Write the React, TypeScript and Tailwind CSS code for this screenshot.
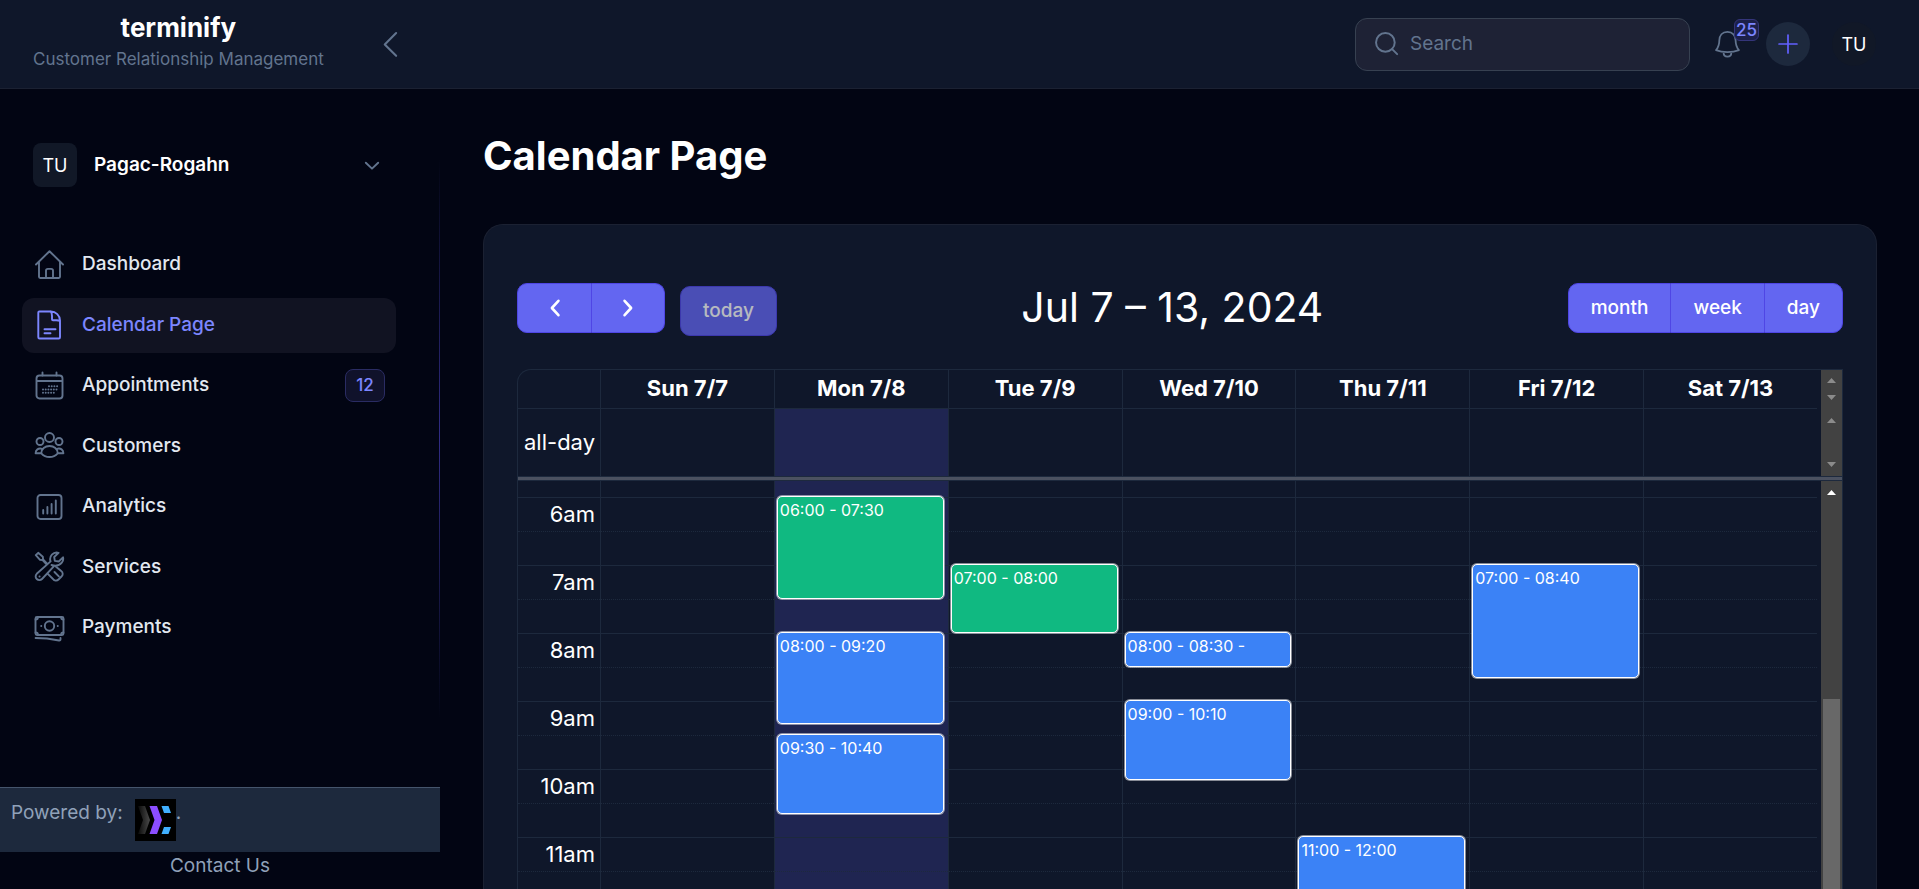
import React from 'react';

interface NavItem {
  label: string;
  icon: React.ReactNode;
  active?: boolean;
  badge?: string;
}

interface CalendarEvent {
  day: number;
  start: number; // minutes from midnight
  end: number;
  label: string;
  color: string;
}

const Icon: React.FC<{ className?: string; children: React.ReactNode }> = ({ className = 'size-8', children }) => (
  <svg
    className={className}
    viewBox="0 0 32 32"
    fill="none"
    stroke="currentColor"
    strokeWidth={1.9}
    strokeLinecap="round"
    strokeLinejoin="round"
    aria-hidden="true"
  >
    {children}
  </svg>
);

const navItems: NavItem[] = [
  {
    label: 'Dashboard',
    icon: (
      <Icon>
        <path d="M3 15.500 16.500 2.200 30 15.500M6 13v14.800c0 .8.400 1.200 1.200 1.200h18.600c.8 0 1.200-.4 1.200-1.200V13M13 28.800v-7c0-1.200.7-1.900 1.900-1.900h3.200c1.200 0 1.900.7 1.900 1.900v7" />
      </Icon>
    ),
  },
  {
    label: 'Calendar Page',
    active: true,
    icon: (
      <Icon>
        <path d="M6.300 2.500h11.500c5 0 9.200 4 9.200 9v16.700a1.300 1.300 0 0 1-1.300 1.300H6.600a1.300 1.300 0 0 1-1.300-1.300V3.500c0-.6.400-1 1-1zM17.800 2.600c1 1.200 1.200 2.600 1.200 4.400v3.200c0 .6.400 1 1 1h3.200c1.800 0 2.900.2 3.700 1M11.500 20.200h11M11.500 24.300h6" />
      </Icon>
    ),
  },
  {
    label: 'Appointments',
    badge: '12',
    icon: (
      <Icon>
        <rect x="3.500" y="5.500" width="26" height="23" rx="3" />
        <path d="M4 11h25M9.500 2.500v3M23.500 2.500v3" />
        <path d="M16 16.200h8.500M10 19.500h14.500M10 22.800h11.500" strokeWidth={2} strokeDasharray="0 2.700" />
      </Icon>
    ),
  },
  {
    label: 'Customers',
    icon: (
      <Icon>
        <circle cx="16.500" cy="7.500" r="4.500" />
        <circle cx="7" cy="11.500" r="3.500" />
        <circle cx="26" cy="11.500" r="3.500" />
        <path d="M8.300 23.300c0-4.500 3.600-7.300 8.200-7.300s8.200 2.800 8.200 7.300c-2.200 2.600-5 3.700-8.200 3.700s-6-1.100-8.200-3.700zM9 18.800c-3.700-.9-6.400 1-6.400 4.400h5.500M24 18.800c3.700-.9 6.400 1 6.400 4.400h-5.500" />
      </Icon>
    ),
  },
  {
    label: 'Analytics',
    icon: (
      <Icon>
        <rect x="4.500" y="4" width="24" height="24" rx="3" />
        <path d="M10.200 19v3.500M14.400 16v6.500M18.600 13v9.500M22.800 9.500v13" />
      </Icon>
    ),
  },
  {
    label: 'Services',
    icon: (
      <Icon>
        <path d="M13.800 12.300 10.100 8.500 9.800 5.700 5.200 1.800 2.800 4.200l4 4.500 2.800.4 3.500 3.800M18.500 14c3.500 1.300 7.800.7 10.300-2.300 1.200-1.500 1.700-3.600 1.200-5.400l-4.200 4.200-4-.6-.6-3.900 4.400-4.200c-2.500-.7-5 0-6.700 1.900-1.700 1.900-2.200 4.400-1.300 6.700L3.700 22.800a3.700 3.700 0 1 0 5.300 5.200L21.500 14.700M14.300 22.300l5.700 5.700a3.500 3.500 0 0 0 5.500.5l3-3a3.500 3.500 0 0 0-.3-5.500l-5.200-4.300M21.500 21l4.300 4.300" />
        <path d="M6.500 25.500h.1" />
      </Icon>
    ),
  },
  {
    label: 'Payments',
    icon: (
      <Icon>
        <rect x="2.500" y="5" width="28" height="18" rx="1.500" />
        <circle cx="16.500" cy="14" r="4.700" />
        <path d="M8.200 14h.1M24.700 14h.1M2.600 7.500c1.500 0 2.300-.8 2.300-2.300M30.400 7.500c-1.500 0-2.300-.8-2.300-2.300M2.600 20.500c1.500 0 2.300.8 2.300 2.300M30.400 20.500c-1.500 0-2.300.8-2.300 2.300M2.600 26l11.400.5 12 2c1 .2 1.500-.3 1.500-1.200V26" />
      </Icon>
    ),
  },
];

const days = ['Sun 7/7', 'Mon 7/8', 'Tue 7/9', 'Wed 7/10', 'Thu 7/11', 'Fri 7/12', 'Sat 7/13'];
const today = 1;

const hours = ['6am', '7am', '8am', '9am', '10am', '11am'];
const firstHour = 6;
const hourHeight = 68;

const events: CalendarEvent[] = [
  { day: 1, start: 360, end: 450, label: '06:00 - 07:30', color: 'bg-[#10b981]' },
  { day: 1, start: 480, end: 560, label: '08:00 - 09:20', color: 'bg-[#3b82f6]' },
  { day: 1, start: 570, end: 640, label: '09:30 - 10:40', color: 'bg-[#3b82f6]' },
  { day: 2, start: 420, end: 480, label: '07:00 - 08:00', color: 'bg-[#10b981]' },
  { day: 3, start: 480, end: 510, label: '08:00 - 08:30 -', color: 'bg-[#3b82f6]' },
  { day: 3, start: 540, end: 610, label: '09:00 - 10:10', color: 'bg-[#3b82f6]' },
  { day: 4, start: 660, end: 720, label: '11:00 - 12:00', color: 'bg-[#3b82f6]' },
  { day: 5, start: 420, end: 520, label: '07:00 - 08:40', color: 'bg-[#3b82f6]' },
];

const toY = (minutes: number) => ((minutes - firstHour * 60) / 60) * hourHeight;

const ScrollArrow: React.FC<{ down?: boolean; className?: string }> = ({ down, className = 'text-[#8b8b8b]' }) => (
  <svg viewBox="0 0 9 5" className={`h-[5px] w-[9px] ${className}`} aria-hidden="true">
    <path d={down ? 'M0 0h9L4.500 5z' : 'M0 5h9L4.500 0z'} fill="currentColor" />
  </svg>
);

const Header: React.FC = () => (
  <header className="flex h-[89px] shrink-0 items-center border-b border-[#1b2132] bg-[#0f172a]">
    <div className="flex w-[440px] shrink-0 items-center justify-between pr-9 pl-[33px]">
      <div className="pb-1 text-center">
        <p className="text-[26px] leading-[34px] font-bold text-white">terminify</p>
        <p className="text-[17px] leading-7 text-slate-500">Customer Relationship Management</p>
      </div>
      <button type="button" aria-label="Collapse sidebar" className="text-slate-500">
        <Icon className="size-7">
          <path d="M23 3.500 10 16.500l13 13" strokeWidth={2.400} />
        </Icon>
      </button>
    </div>
    <div className="flex flex-1 items-center justify-end pr-[43px]">
      <label className="flex h-[53px] w-[335px] items-center gap-[10px] rounded-xl border border-[#374151] bg-[#1e2235] pl-[18px]">
        <Icon className="size-[26px] shrink-0 text-slate-500">
          <circle cx="14" cy="14" r="11.500" strokeWidth={2.400} />
          <path d="m22.300 22.300 6.200 6.200" strokeWidth={2.400} />
        </Icon>
        <input
          type="search"
          aria-label="Search"
          placeholder="Search"
          className="w-full bg-transparent text-[19px] text-white outline-none placeholder:text-slate-500"
        />
      </label>
      <button type="button" aria-label="Notifications" className="relative ml-[22px] text-slate-500">
        <Icon className="size-[30px]">
          <path d="M16.500 3C11 3 7.800 7 7.800 12.300c0 5.200-1.300 7.700-3.500 10.200 3.500 1.500 7.600 2.200 12.200 2.200s8.700-.7 12.200-2.200c-2.200-2.500-3.500-5-3.500-10.200C25.200 7 22 3 16.500 3zM12.300 24.800c0 2.900 1.800 4.700 4.200 4.700s4.200-1.800 4.200-4.700" />
        </Icon>
        <span className="absolute -top-[10px] left-[22px] rounded-md border border-[#34357a] bg-[#1c2049] px-px text-[17px] leading-5 font-medium text-indigo-400">
          25
        </span>
      </button>
      <button
        type="button"
        aria-label="Add"
        className="ml-6 flex size-11 items-center justify-center rounded-full bg-slate-800 text-indigo-500"
      >
        <Icon className="size-[22px]">
          <path d="M16 3v26M3 16h26" strokeWidth={2.500} />
        </Icon>
      </button>
      <button type="button" className="ml-[22px] size-11 rounded-full bg-[#111827] text-[18px] text-white">
        TU
      </button>
    </div>
  </header>
);

const Sidebar: React.FC = () => (
  <aside className="relative flex w-[440px] shrink-0 flex-col pt-[54px]">
    <div className="absolute top-[70px] right-0 h-[560px] w-px bg-linear-to-b from-transparent via-indigo-900 to-transparent" />
    <button type="button" className="flex items-center pr-[59px] pl-[33px] text-white">
      <span className="flex size-11 items-center justify-center rounded-lg bg-[#111827] text-[18px]">TU</span>
      <span className="ml-[17px] flex-1 text-left text-[19px] font-semibold">Pagac-Rogahn</span>
      <Icon className="size-[18px] text-slate-500">
        <path d="m5 12 11 10.500L27 12" strokeWidth={3.400} />
      </Icon>
    </button>
    <nav className="mt-[50px] mr-11 ml-[22px] flex h-[418px] flex-col justify-between">
      {navItems.map(item => (
        <a
          key={item.label}
          href="#"
          className={`flex h-[55px] items-center rounded-xl px-[11px] ${item.active ? 'bg-[#111322]' : ''}`}
        >
          <span className={item.active ? 'text-indigo-400' : 'text-slate-500'}>{item.icon}</span>
          <span
            className={`ml-[17px] flex-1 text-[19px] font-medium ${item.active ? 'text-indigo-400' : 'text-slate-200'}`}
          >
            {item.label}
          </span>
          {item.badge && (
            <span className="flex h-[33px] w-10 items-center justify-center rounded-lg border border-[#2a2c63] bg-[#10122b] text-[17px] font-medium text-indigo-400">
              {item.badge}
            </span>
          )}
        </a>
      ))}
    </nav>
    <div className="mt-auto flex h-[65px] shrink-0 items-start border-t border-slate-600 bg-slate-800 pl-[11px] text-[19px] text-slate-400">
      <span className="mt-[11px] mr-3 leading-7">Powered by:</span>
      <svg viewBox="0 0 41 42" className="mt-[11px] h-[42px] w-[41px]" aria-hidden="true">
        <defs>
          <linearGradient id="chevron-fade" x1="0" x2="1">
            <stop offset="0" stopColor="#0a0a0a" />
            <stop offset="1" stopColor="#4a4a4a" />
          </linearGradient>
        </defs>
        <rect width="41" height="42" fill="#000" />
        <path d="M3 7h7l5 14-5 14H3l5-14z" fill="url(#chevron-fade)" />
        <path d="M14.500 7h7.500l5 14-5 14h-7.500l5-14z" fill="#8b4dff" />
        <path d="M26.500 7h7l2.500 7h-7zM29 28h7l-2.500 7h-7z" fill="#40b0ff" />
      </svg>
      <span className="mt-[11px] leading-7">.</span>
    </div>
    <a href="#" className="flex h-[37px] shrink-0 justify-center text-[19px] leading-7 text-slate-400">
      Contact Us
    </a>
  </aside>
);

const buttonClass = 'h-[50px] border-[#4f46e5] bg-[#6366f1] text-[19px] font-medium text-white';

const Toolbar: React.FC = () => (
  <div className="flex items-start justify-between">
    <div className="flex gap-[15px]">
      <div className="flex">
        <button
          type="button"
          aria-label="Previous week"
          className={`${buttonClass} flex w-[75px] items-center justify-center rounded-l-[10px] border`}
        >
          <Icon className="size-[22px]">
            <path d="M21 5.500 11.500 16 21 26.500" strokeWidth={3.800} />
          </Icon>
        </button>
        <button
          type="button"
          aria-label="Next week"
          className={`${buttonClass} flex w-[73px] items-center justify-center rounded-r-[10px] border border-l-0`}
        >
          <Icon className="size-[22px]">
            <path d="M11 5.500 20.500 16 11 26.500" strokeWidth={3.800} />
          </Icon>
        </button>
      </div>
      <button type="button" disabled className={`${buttonClass} mt-[3px] rounded-[10px] border px-[22px] opacity-70`}>
        today
      </button>
    </div>
    <h2 className="text-[41px] leading-[48px] text-white">Jul 7 – 13, 2024</h2>
    <div className="flex">
      <button type="button" className={`${buttonClass} rounded-l-[10px] border px-[22px]`}>month</button>
      <button type="button" className={`${buttonClass} border-y px-[22px]`}>week</button>
      <button type="button" className={`${buttonClass} rounded-r-[10px] border px-[22px]`}>day</button>
    </div>
  </div>
);

const DayColumn: React.FC<{ day: number }> = ({ day }) => (
  <div className={`relative border-l border-slate-800 ${day === today ? 'bg-[#1f2551]' : ''}`}>
    <div className="h-4" />
    {hours.map(hour => (
      <div key={hour} className="h-[68px] border-t border-slate-800">
        <div className="h-[34px] border-b border-dotted border-slate-800" />
      </div>
    ))}
    <div className="absolute inset-x-0 top-4">
      {events
        .filter(event => event.day === day)
        .map(event => (
          <div
            key={event.label}
            className={`absolute right-[4px] left-[2px] rounded-[5px] border border-white px-[2px] text-[16px] leading-[27px] text-white shadow-[0_0_0_1px_rgba(255,255,255,0.5)] ${event.color}`}
            style={{ top: toY(event.start) - 1, height: toY(event.end) - toY(event.start) + 1 }}
          >
            {event.label}
          </div>
        ))}
    </div>
  </div>
);

const WeekGrid: React.FC = () => (
  <div className="mt-[33px] overflow-hidden rounded-tl-[14px] border border-b-0 border-slate-800 text-[22px] text-white">
    <div className="flex">
      <div className="flex-1">
        <div className="grid h-[39px] grid-cols-[82px_repeat(7,minmax(0,1fr))] border-b border-slate-800">
          <div />
          {days.map(day => (
            <div key={day} className="border-l border-slate-800 text-center leading-9 font-bold">
              {day}
            </div>
          ))}
        </div>
        <div className="grid h-[67px] grid-cols-[82px_repeat(7,minmax(0,1fr))]">
          <div className="pr-[5px] text-right leading-[67px]">all-day</div>
          {days.map((day, index) => (
            <div key={day} className={`border-l border-slate-800 ${index === today ? 'bg-[#1f2551]' : ''}`} />
          ))}
        </div>
      </div>
      <div className="ml-1 w-[21px] bg-[#424242]">
        <div className="flex h-[39px] flex-col items-center justify-between pt-2 pb-[9px]">
          <ScrollArrow />
          <ScrollArrow down />
        </div>
        <div className="flex h-[67px] flex-col items-center justify-between py-[9px]">
          <ScrollArrow />
          <ScrollArrow down />
        </div>
      </div>
    </div>
    <div className="h-[5px] border-y border-slate-800 bg-[#4b5160]" />
    <div className="flex">
      <div className="grid flex-1 grid-cols-[82px_repeat(7,minmax(0,1fr))]">
        <div>
          <div className="h-4" />
          {hours.map(hour => (
            <div key={hour} className="h-[68px] border-t border-slate-800">
              <div className="h-[34px] border-b border-dotted border-slate-800 pr-[5px] text-right leading-8">
                {hour}
              </div>
            </div>
          ))}
        </div>
        {days.map((day, index) => (
          <DayColumn key={day} day={index} />
        ))}
      </div>
      <div className="ml-1 flex w-[21px] flex-col items-center bg-[#424242] pt-[9px]">
        <ScrollArrow className="text-white" />
        <div className="mt-[204px] w-[17px] flex-1 bg-[#686868]" />
      </div>
    </div>
  </div>
);

const App: React.FC = () => (
  <div className="flex h-screen flex-col overflow-hidden bg-[#020513] font-['Inter',sans-serif]">
    <Header />
    <div className="flex min-h-0 flex-1">
      <Sidebar />
      <main className="min-w-0 flex-1 overflow-hidden pt-[42px] pr-[42px] pl-[43px]">
        <h1 className="text-[40px] leading-[50px] font-bold text-white">Calendar Page</h1>
        <section className="mt-[43px] rounded-t-[20px] border border-b-0 border-[#1b2132] bg-[#0f172a] px-[33px] pt-[58px]">
          <Toolbar />
          <WeekGrid />
        </section>
      </main>
    </div>
  </div>
);

export default App;
